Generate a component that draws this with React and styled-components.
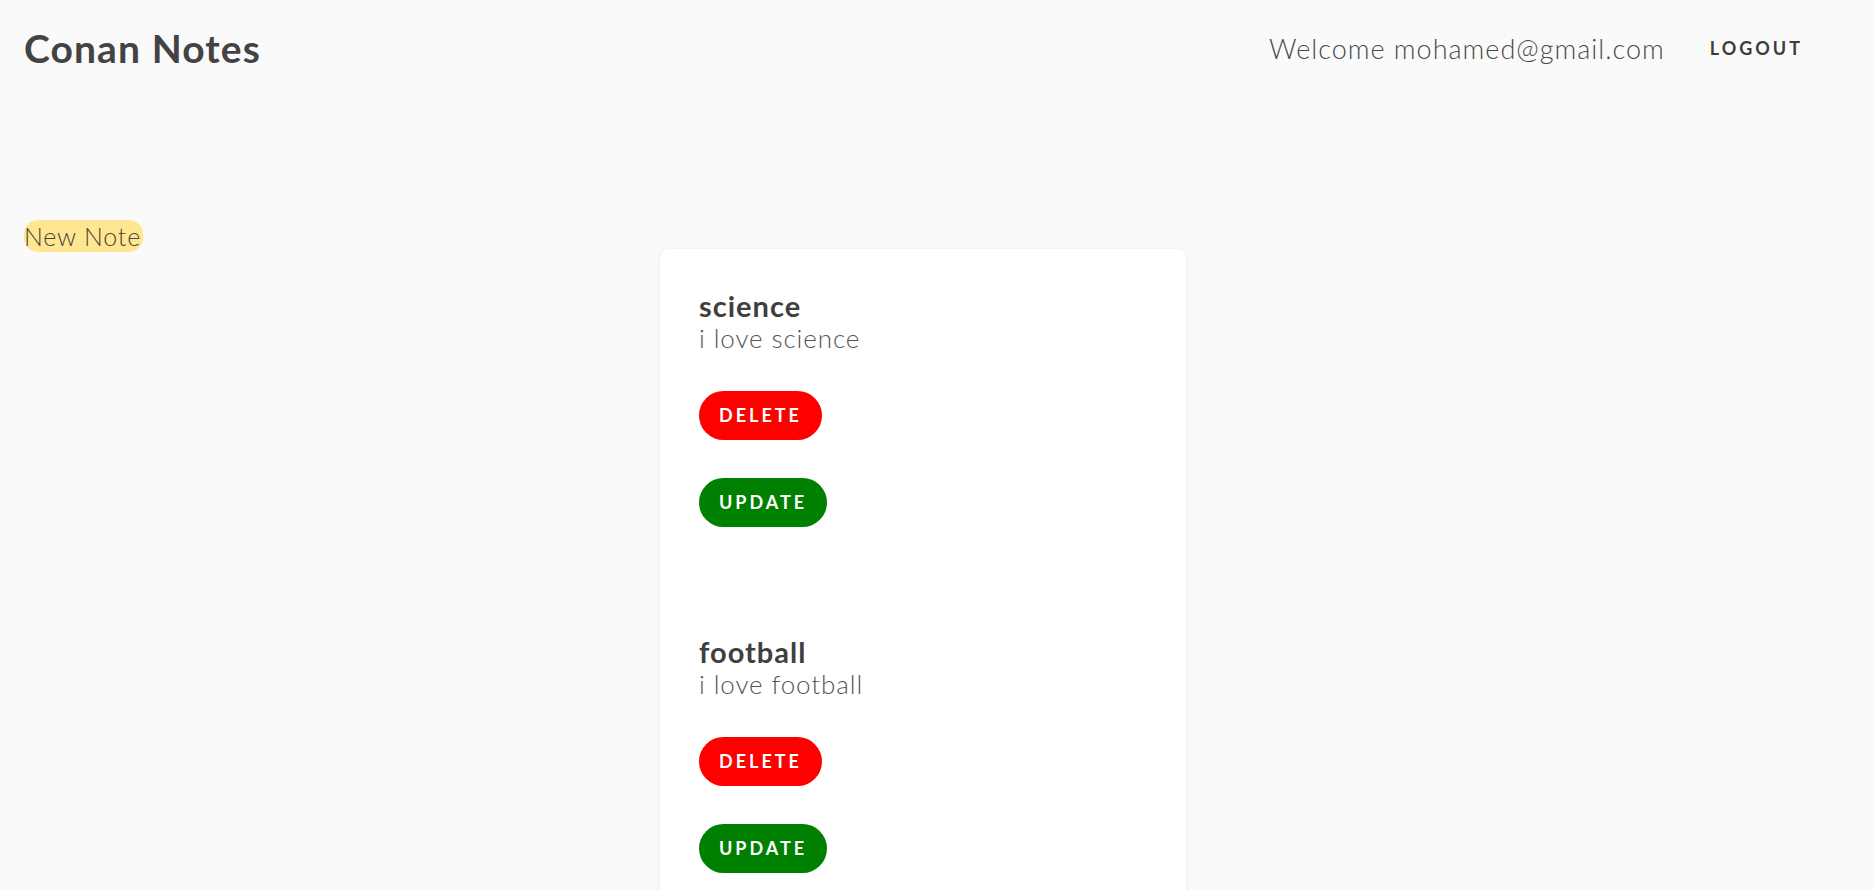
import React from 'react';
import styled, { createGlobalStyle } from 'styled-components';

const GlobalStyle = createGlobalStyle`
  body {
    margin: 0;
    background-color: #fafafa;
    font-family: Lato, "Open Sans", sans-serif;
    color: #444;
  }
`;

const Header = styled.header`
  height: 96px;
  padding: 0 70px 0 24px;
  display: flex;
  align-items: center;
  justify-content: space-between;
`;

const Brand = styled.h1`
  margin: 0;
  font-size: 39px;
  font-weight: 700;
  color: #434343;
  letter-spacing: 1.1px;
`;

const UserBox = styled.div`
  display: flex;
  align-items: center;
  gap: 45px;
`;

const Welcome = styled.span`
  font-size: 27px;
  font-weight: 300;
  color: #4a4a4a;
  letter-spacing: 1px;
`;

const Logout = styled.button`
  border: none;
  background: none;
  padding: 0;
  font-family: inherit;
  font-size: 18px;
  font-weight: 700;
  letter-spacing: 3px;
  color: #3d3d3d;
  cursor: pointer;
`;

const Main = styled.main`
  padding: 124px 24px 0;
`;

const NewNote = styled.button`
  display: block;
  height: 32px;
  padding: 0 2px 0 0;
  border: none;
  border-radius: 14px;
  background-color: #ffe792;
  font-family: inherit;
  font-size: 25px;
  font-weight: 300;
  color: #4b4436;
  letter-spacing: 0.8px;
  cursor: pointer;
`;

const NoteList = styled.section`
  display: flex;
  justify-content: center;
  padding-right: 27px;
  margin-top: -3px;
`;

const Card = styled.div`
  width: 526px;
  box-sizing: border-box;
  padding: 40px 39px 40px;
  background: #fff;
  border-radius: 9px;
  box-shadow: 0 1px 4px rgba(0, 0, 0, 0.08);
  display: flex;
  flex-direction: column;
  gap: 108px;
`;

const Note = styled.article`
  display: flex;
  flex-direction: column;
  align-items: flex-start;
`;

const Title = styled.h2`
  margin: 0;
  font-size: 29px;
  line-height: 1.2;
  font-weight: 700;
  color: #3f3f3f;
  letter-spacing: 1px;
`;

const Body = styled.p`
  margin: 0 0 38px;
  font-size: 26px;
  line-height: 1.12;
  font-weight: 300;
  color: #555;
  letter-spacing: 0.9px;
`;

const Action = styled.button`
  height: 49px;
  padding: 0 20px;
  border: none;
  border-radius: 25px;
  background-color: ${props => (props.kind === 'delete' ? '#ff0000' : '#008000')};
  color: #fff;
  font-family: inherit;
  font-size: 18px;
  font-weight: 700;
  letter-spacing: 3px;
  cursor: pointer;

  & + & {
    margin-top: 38px;
  }
`;

const notes = [
  { id: 1, title: 'science', body: 'i love science' },
  { id: 2, title: 'football', body: 'i love football' },
];

export default function App() {
  return (
    <>
      <GlobalStyle />
      <Header>
        <Brand>Conan Notes</Brand>
        <UserBox>
          <Welcome>Welcome mohamed@gmail.com</Welcome>
          <Logout>LOGOUT</Logout>
        </UserBox>
      </Header>
      <Main>
        <NewNote>New Note</NewNote>
        <NoteList>
          <Card>
            {notes.map(note => (
              <Note key={note.id}>
                <Title>{note.title}</Title>
                <Body>{note.body}</Body>
                <Action kind="delete">DELETE</Action>
                <Action kind="update">UPDATE</Action>
              </Note>
            ))}
          </Card>
        </NoteList>
      </Main>
    </>
  );
}
